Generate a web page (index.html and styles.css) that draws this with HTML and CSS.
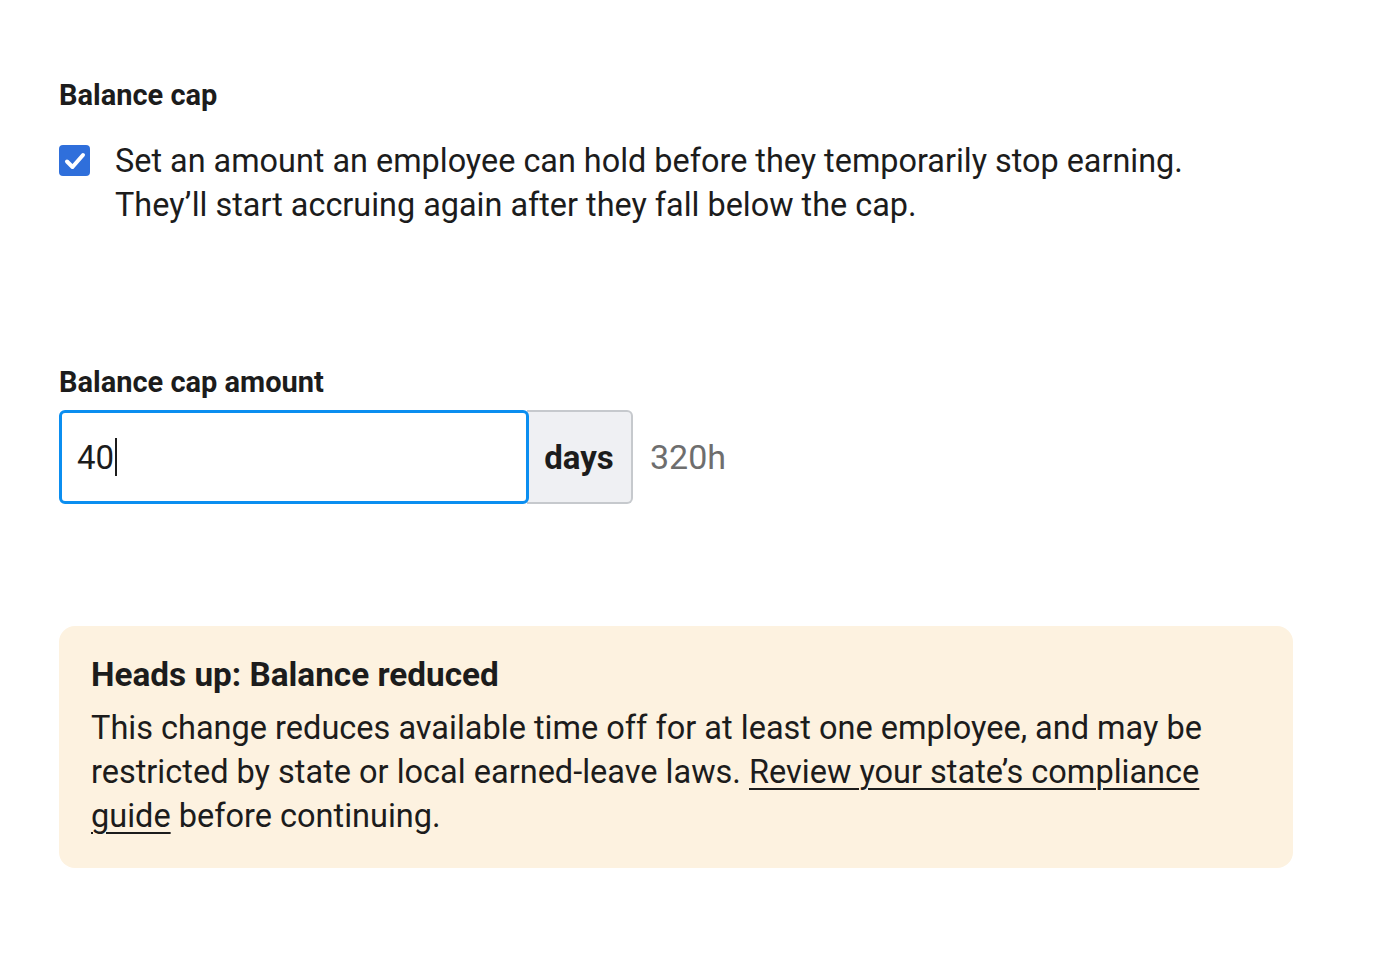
FILE: index.html
```html
<!DOCTYPE html>
<html lang="en">
<head>
  <meta charset="UTF-8">
  <meta name="viewport" content="width=device-width, initial-scale=1.0">
  <title>Balance cap</title>
  <link rel="stylesheet" href="styles.css">
</head>
<body>
  <div class="page">
    <h2 class="section-title">Balance cap</h2>
    <label class="check-row">
      <span class="checkbox">
        <svg viewBox="0 0 24 24" width="24" height="24" aria-hidden="true">
          <path d="M4 12.5 L9.5 18 L20 6" fill="none" stroke="#fff" stroke-width="4" stroke-linecap="round" stroke-linejoin="round"/>
        </svg>
      </span>
      <span class="check-text">Set an amount an employee can hold before they temporarily stop earning. They’ll start accruing again after they fall below the cap.</span>
    </label>

    <div class="field">
      <label class="field-label" for="cap-amount">Balance cap amount</label>
      <div class="field-row">
        <div class="input-group">
          <div class="input" id="cap-amount">40<span class="caret"></span></div>
          <span class="addon">days</span>
        </div>
        <span class="hint">320h</span>
      </div>
    </div>

    <div class="alert">
      <h3>Heads up: Balance reduced</h3>
      <p>This change reduces available time off for at least one employee, and may be restricted by state or local earned-leave laws. <a href="#">Review your state’s compliance guide</a> before continuing.</p>
    </div>
  </div>
</body>
</html>
```

FILE: styles.css
```css
body {
  margin: 0;
  font-family: Roboto, "Liberation Sans", sans-serif;
  color: #1c1c1c;
  background: #fff;
}
.page {
  width: 1234px;
  padding: 79px 59px;
}
.section-title {
  font-size: 29px;
  line-height: 32px;
  font-weight: 700;
  margin: 0;
}
.check-row {
  display: flex;
  align-items: flex-start;
  gap: 25px;
  margin-top: 28px;
}
.checkbox {
  flex: none;
  width: 31px;
  height: 31px;
  margin-top: 6px;
  border-radius: 4px;
  background: #2f6fdb;
  display: flex;
  align-items: center;
  justify-content: center;
}
.check-text {
  max-width: 1120px;
  font-size: 32.4px;
  line-height: 44px;
}
.field {
  margin-top: 139px;
}
.field-label {
  display: block;
  font-size: 29px;
  line-height: 32px;
  font-weight: 700;
}
.field-row {
  display: flex;
  align-items: center;
  gap: 17px;
  margin-top: 12px;
}
.input-group {
  display: flex;
}
.input {
  width: 470px;
  height: 94px;
  box-sizing: border-box;
  border: 3px solid #0b8ef0;
  border-radius: 6px;
  padding: 0 15px;
  display: flex;
  align-items: center;
  font-size: 33px;
  position: relative;
  z-index: 1;
}
.caret {
  display: inline-block;
  width: 2px;
  height: 38px;
  background: #1c1c1c;
  margin-left: 1px;
}
.addon {
  width: 106px;
  height: 94px;
  box-sizing: border-box;
  margin-left: -2px;
  border: 2px solid #c6c9cd;
  border-left: none;
  border-radius: 0 6px 6px 0;
  background: #eff0f3;
  display: flex;
  align-items: center;
  justify-content: center;
  font-size: 33px;
  font-weight: 700;
}
.hint {
  font-size: 34px;
  color: #6e6e6e;
}
.alert {
  margin-top: 122px;
  background: #fdf2e0;
  border-radius: 16px;
  padding: 31px 32px 30px;
}
.alert h3 {
  margin: 0;
  font-size: 33.3px;
  line-height: 36px;
  font-weight: 700;
}
.alert p {
  margin: 13px 0 0;
  font-size: 32.5px;
  line-height: 44px;
}
.alert a {
  color: inherit;
  text-decoration: underline;
  text-decoration-thickness: 2px;
  text-underline-offset: 5px;
}
```
